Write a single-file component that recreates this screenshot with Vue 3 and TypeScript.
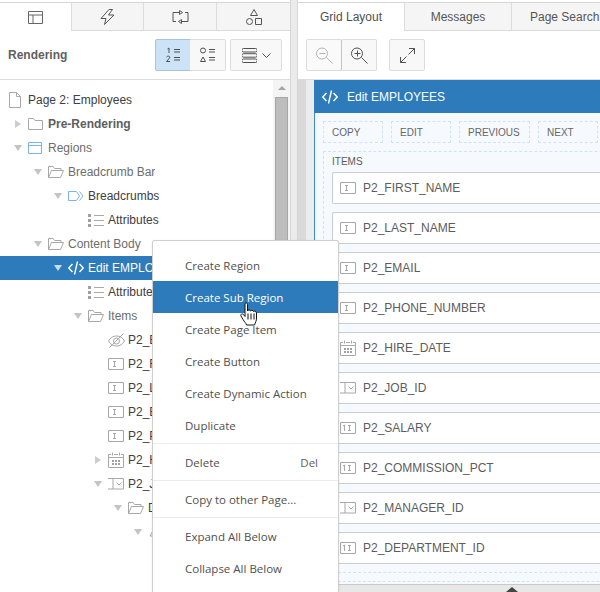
<script setup lang="ts">
interface TreeRow {
  label: string
  level: number
  icon: string
  twisty?: 'open' | 'closed'
  tone?: string
  clip?: boolean
}

const MENU_LEFT = 152

const iconSizes: Record<string, [number, number]> = {
  page: [14, 16],
  folder: [15, 12],
  open: [16, 12],
  region: [14, 12],
  crumb: [16, 10],
  list: [16, 13],
  code: [16, 14],
  hidden: [17, 15],
  input: [16, 12],
  number: [16, 12],
  date: [16, 16],
  select: [16, 12],
  shape: [14, 12],
}

const rows: TreeRow[] = [
  { label: 'Page 2: Employees', level: -1, icon: 'page', tone: 'dark' },
  { label: 'Pre-Rendering', level: 0, icon: 'folder', twisty: 'closed', tone: 'bold' },
  { label: 'Regions', level: 0, icon: 'region', twisty: 'open', tone: 'muted' },
  { label: 'Breadcrumb Bar', level: 1, icon: 'open', twisty: 'open', tone: 'muted' },
  { label: 'Breadcrumbs', level: 2, icon: 'crumb', twisty: 'open', tone: 'dark' },
  { label: 'Attributes', level: 3, icon: 'list', tone: 'dark' },
  { label: 'Content Body', level: 1, icon: 'open', twisty: 'open', tone: 'muted' },
  { label: 'Edit EMPLOYEES', level: 2, icon: 'code', twisty: 'open', tone: 'selected', clip: true },
  { label: 'Attributes', level: 3, icon: 'list', tone: 'dark', clip: true },
  { label: 'Items', level: 3, icon: 'open', twisty: 'open', tone: 'muted', clip: true },
  { label: 'P2_EMPLOYEE_ID', level: 4, icon: 'hidden', tone: 'dark', clip: true },
  { label: 'P2_FIRST_NAME', level: 4, icon: 'input', tone: 'dark', clip: true },
  { label: 'P2_LAST_NAME', level: 4, icon: 'input', tone: 'dark', clip: true },
  { label: 'P2_EMAIL', level: 4, icon: 'input', tone: 'dark', clip: true },
  { label: 'P2_PHONE_NUMBER', level: 4, icon: 'input', tone: 'dark', clip: true },
  { label: 'P2_HIRE_DATE', level: 4, icon: 'date', twisty: 'closed', tone: 'dark', clip: true },
  { label: 'P2_JOB_ID', level: 4, icon: 'select', twisty: 'open', tone: 'dark', clip: true },
  { label: 'Default', level: 5, icon: 'open', twisty: 'open', tone: 'dark', clip: true },
  { label: 'Action', level: 6, icon: 'shape', twisty: 'open', tone: 'dark', clip: true },
]

function rowIndent(level: number): number {
  return 8 + (level + 1) * 20
}

function textClip(row: TreeRow): Record<string, string> {
  if (!row.clip) return {}
  const room = Math.max(0, MENU_LEFT - (rowIndent(row.level) + 20))
  return { maxWidth: room + 'px' }
}

const items = [
  { name: 'P2_FIRST_NAME', icon: 'input' },
  { name: 'P2_LAST_NAME', icon: 'input' },
  { name: 'P2_EMAIL', icon: 'input' },
  { name: 'P2_PHONE_NUMBER', icon: 'input' },
  { name: 'P2_HIRE_DATE', icon: 'date' },
  { name: 'P2_JOB_ID', icon: 'select' },
  { name: 'P2_SALARY', icon: 'number' },
  { name: 'P2_COMMISSION_PCT', icon: 'number' },
  { name: 'P2_MANAGER_ID', icon: 'select' },
  { name: 'P2_DEPARTMENT_ID', icon: 'number' },
]

const gridButtons = ['COPY', 'EDIT', 'PREVIOUS', 'NEXT']

const menuGroups = [
  [
    { label: 'Create Region' },
    { label: 'Create Sub Region', active: true },
    { label: 'Create Page Item' },
    { label: 'Create Button' },
    { label: 'Create Dynamic Action' },
    { label: 'Duplicate' },
  ],
  [{ label: 'Delete', key: 'Del' }],
  [{ label: 'Copy to other Page...' }],
  [{ label: 'Expand All Below' }, { label: 'Collapse All Below' }],
]
</script>

<template>
  <div class="app">
    <svg class="defs" width="0" height="0" aria-hidden="true">
      <defs>
        <symbol id="i-page" viewBox="0 0 14 16"><path d="M1.5.5h7l4 4v11h-11zM8.5.5v4h4" /></symbol>
        <symbol id="i-folder" viewBox="0 0 15 12"><path d="M.5 1.5V.5h5l1.5 2h7.500v9H.5z" /></symbol>
        <symbol id="i-open" viewBox="0 0 16 12"><path d="M.5 11.500V.5h4.500l1.500 2h6.500v2M.5 11.500h12l3-7H3.500z" /></symbol>
        <symbol id="i-region" viewBox="0 0 14 12"><path d="M.5.5h13v11H.5zM.5 3.500h13" /></symbol>
        <symbol id="i-crumb" viewBox="0 0 16 10"><path d="M.5.5h8l3 4.500-3 4.500h-8zM11.500.5l3.500 4.500-3.500 4.500" /></symbol>
        <symbol id="i-list" viewBox="0 0 16 13"><path d="M6 1.500h10M6 6.500h10M6 11.500h10" /><path class="dot" d="M0 0h3v3H0zM0 5h3v3H0zM0 10h3v3H0z" /></symbol>
        <symbol id="i-code" viewBox="0 0 16 14"><path d="M4.500 3 .8 7l3.700 4M11.500 3l3.700 4-3.700 4M9.500.5l-3 13" /></symbol>
        <symbol id="i-hidden" viewBox="0 0 17 15"><path d="M.5 8c2-3.500 4.700-5 8-5s6 1.500 8 5c-2 3.500-4.700 5-8 5s-6-1.500-8-5zM5.500 8a3 3 0 1 0 6 0 3 3 0 1 0-6 0M1.500 14.500l14-14" /></symbol>
        <symbol id="i-input" viewBox="0 0 16 12"><path d="M.5.500h15v11H.5zM5 3.500h3M5 8.500h3M6.500 3.500v5" /></symbol>
        <symbol id="i-number" viewBox="0 0 16 12"><path d="M.5.500h15v11H.5zM3 4l1.500-1v6M8 3.500h3M8 8.500h3M9.500 3.500v5" /></symbol>
        <symbol id="i-date" viewBox="0 0 16 16"><path d="M3 2.500H.5v13h15v-13H13M6 2.500h4M.5 5.500h15M4.500 .5v3M11.500 .5v3" /><path class="dot" d="M4 8h2v2H4zM7 8h2v2H7zM10 8h2v2h-2zM4 11h2v2H4zM7 11h2v2H7zM10 11h2v2h-2z" /></symbol>
        <symbol id="i-select" viewBox="0 0 16 12"><path d="M0 .5h15.500v10.500H0M5 .5v10.500M8.500 4.500l2.500 2.500 2.500-2.500" /></symbol>
        <symbol id="i-shape" viewBox="0 0 14 12"><path d="M7 1l5 9H2z" /></symbol>
      </defs>
    </svg>

    <section class="left">
      <div class="top-line"></div>
      <div class="tabs">
        <div class="tab tab-on">
          <svg width="15" height="13" viewBox="0 0 15 13"><path d="M.5.500h14v12H.5zM.5 4h14M5 4v8.500" /></svg>
        </div>
        <div class="tab">
          <svg width="15" height="16" viewBox="0 0 15 16"><path d="M9 .5 1 9.500h5L4.500 15.500 14 6H8.500l4-5.500z" /></svg>
        </div>
        <div class="tab">
          <svg width="17" height="14" viewBox="0 0 17 14"><path d="M7 2.500H1v9h3M10 11.500h6v-9h-3M7.500.5v4l3-2zM9.500 9.500v4l-3-2z" /></svg>
        </div>
        <div class="tab">
          <svg width="16" height="16" viewBox="0 0 16 16"><path d="M8 .5l3.500 6h-7zM9.500 9.500h6v6h-6zM6.500 12.500a3 3 0 1 1-6 0 3 3 0 1 1 6 0z" /></svg>
        </div>
      </div>

      <div class="toolbar left-toolbar">
        <span class="panel-title">Rendering</span>
        <div class="btn-group">
          <button class="tbtn toggle toggle-on" type="button">
            <svg width="14" height="16" viewBox="0 0 14 16"><path d="M1.500 2 3 1v5M8 2.500h6M8 5h6M8 10.500h6M8 13h6M.5 10c1-1.500 4-1 3 1L.5 14.500h3.500" /></svg>
          </button>
          <button class="tbtn toggle" type="button">
            <svg width="15" height="16" viewBox="0 0 15 16"><path d="M5.500 3.500a2.500 2.500 0 1 1-5 0 2.500 2.500 0 1 1 5 0zM3 10l2.500 4.500h-5zM9 2.500h6M9 5h6M9 10.500h6M9 13h6" /></svg>
          </button>
        </div>
        <button class="tbtn view-btn" type="button">
          <svg width="15" height="15" viewBox="0 0 15 15"><path d="M1.500.5h12a1 1 0 0 1 0 3.500h-12a1 1 0 0 1 0-3.500zM1.500 5.700h12a1 1 0 0 1 0 3.500h-12a1 1 0 0 1 0-3.500zM1.500 11h12a1 1 0 0 1 0 3.500h-12a1 1 0 0 1 0-3.500z" /></svg>
          <svg width="9" height="5" viewBox="0 0 9 5"><path d="M.5.500l4 4 4-4" /></svg>
        </button>
      </div>

      <div class="tree-wrap">
        <div class="tree">
          <div
            v-for="(row, i) in rows"
            :key="i"
            class="row"
            :class="row.tone"
            :style="{ paddingLeft: rowIndent(row.level) + 'px' }"
          >
            <span class="twist-slot">
              <span v-if="row.twisty" class="twisty" :class="row.twisty"></span>
            </span>
            <span class="icon-slot">
              <svg
                class="ico"
                :class="'ico-' + row.icon"
                :width="iconSizes[row.icon][0]"
                :height="iconSizes[row.icon][1]"
              ><use :href="'#i-' + row.icon" /></svg>
            </span>
            <span class="row-text" :style="textClip(row)">{{ row.label }}</span>
          </div>
        </div>
        <div class="scrollbar">
          <span class="scroll-up"></span>
          <span class="scroll-thumb"></span>
        </div>
      </div>
    </section>

    <div class="splitter"></div>

    <section class="right">
      <div class="top-line"></div>
      <div class="tabs right-tabs">
        <div class="rtab tab-on">Grid Layout</div>
        <div class="rtab">Messages</div>
        <div class="rtab rtab-last">Page Search</div>
      </div>

      <div class="toolbar right-toolbar">
        <div class="btn-group">
          <button class="tbtn zoom zoom-off" type="button">
            <svg width="17" height="17" viewBox="0 0 17 17"><path d="M11.500 6.500a5.500 5.500 0 1 1-11 0 5.500 5.500 0 1 1 11 0zM3.500 6.500h6M10.500 10.500l6 6" /></svg>
          </button>
          <button class="tbtn zoom" type="button">
            <svg width="17" height="17" viewBox="0 0 17 17"><path d="M11.500 6.500a5.500 5.500 0 1 1-11 0 5.500 5.500 0 1 1 11 0zM3.500 6.500h6M6.500 3.500v6M10.500 10.500l6 6" /></svg>
          </button>
        </div>
        <button class="tbtn zoom expand" type="button">
          <svg width="15" height="15" viewBox="0 0 15 15"><path d="M9 .5h5.500V6M14.500.5l-6 6M6 14.500H.5V9M.5 14.500l6-6" /></svg>
        </button>
      </div>

      <div class="canvas">
        <div class="card">
          <header class="card-head">
            <svg class="head-ico" width="16" height="14"><use href="#i-code" /></svg>
            <span>Edit EMPLOYEES</span>
          </header>
          <div class="card-body">
            <div class="grid-buttons">
              <span v-for="b in gridButtons" :key="b" class="grid-btn">{{ b }}</span>
            </div>
            <div class="items-box">
              <div class="items-label">ITEMS</div>
              <div class="items-list">
                <div v-for="it in items" :key="it.name" class="item">
                  <span class="item-ico">
                    <svg
                      class="ico"
                      :width="iconSizes[it.icon][0]"
                      :height="iconSizes[it.icon][1]"
                    ><use :href="'#i-' + it.icon" /></svg>
                  </span>
                  <span>{{ it.name }}</span>
                </div>
              </div>
            </div>
            <div class="empty-drop"></div>
          </div>
        </div>
      </div>
      <div class="strip"><span class="strip-arrow"></span></div>
    </section>

    <nav class="menu">
      <template v-for="(group, g) in menuGroups" :key="g">
        <div v-if="g > 0" class="menu-sep"></div>
        <div
          v-for="entry in group"
          :key="entry.label"
          class="menu-item"
          :class="{ 'menu-active': 'active' in entry && entry.active }"
        >
          <span>{{ entry.label }}</span>
          <span v-if="'key' in entry" class="menu-key">{{ entry.key }}</span>
        </div>
      </template>
    </nav>

    <svg class="cursor" width="18" height="25" viewBox="0 0 18 25">
      <path
        d="M5 1.500c1-1 2.500-.5 2.500 1V9c.5-1.500 2.500-1.500 3 0 .5-1 2.500-1 3 .5.700-.8 2.800-.5 3 1.500v5c0 3-1 4-2 7H6.500c-.5-2-2-3-3.500-5.500L1 14c-.8-1.500 1-3 2.500-1.500L5 14.500z"
      />
      <path class="cursor-lines" d="M8 11.500v6M11 11.500v6M14 11.500v6" />
    </svg>
  </div>
</template>

<style>
html,
body {
  margin: 0;
  padding: 0;
  background: #fff;
}
</style>

<style scoped>
.app {
  position: relative;
  display: flex;
  width: 600px;
  height: 592px;
  overflow: hidden;
  background: #fff;
  color: #404040;
  font-family: "Liberation Sans", Arial, sans-serif;
  font-size: 12px;
}

.defs {
  position: absolute;
}

.left {
  display: flex;
  flex-direction: column;
  width: 290px;
  flex: none;
}

.splitter {
  width: 8px;
  flex: none;
  box-sizing: border-box;
  background: #ebebeb;
  border-left: 1px solid #d6d6d6;
  border-right: 1px solid #d6d6d6;
}

.right {
  display: flex;
  flex-direction: column;
  flex: 1;
  min-width: 0;
  overflow: hidden;
}

.top-line {
  height: 3px;
  flex: none;
  box-sizing: border-box;
  border-bottom: 1px solid #d8d8d8;
}

.tabs {
  display: flex;
  height: 28px;
  flex: none;
  box-sizing: border-box;
  background: #f5f5f5;
  border-bottom: 1px solid #dcdcdc;
}

.tab {
  display: flex;
  width: 72px;
  flex: none;
  align-items: center;
  justify-content: center;
  box-sizing: border-box;
  border-right: 1px solid #dcdcdc;
  height: 27px;
}

.tab:nth-child(3) {
  width: 73px;
}

.tab svg {
  fill: none;
  stroke: #555;
}

.tab:last-child {
  width: 73px;
  border-right: none;
}

.tab-on {
  height: 28px;
  background: #fff;
  position: relative;
}

.tab-on svg {
  stroke: #666;
}

.rtab {
  display: flex;
  width: 107px;
  flex: none;
  align-items: center;
  justify-content: center;
  box-sizing: border-box;
  border-right: 1px solid #dcdcdc;
  height: 27px;
  color: #555;
}

.rtab.tab-on {
  height: 28px;
  color: #505050;
}

.rtab-last {
  justify-content: flex-start;
  padding-left: 18px;
  width: 100px;
  border-right: none;
}

.toolbar {
  display: flex;
  align-items: center;
  height: 49px;
  flex: none;
  box-sizing: border-box;
  border-bottom: 1px solid #dcdcdc;
  background: #fff;
}

.left-toolbar {
  padding: 0 8px;
}

.panel-title {
  flex: 1;
  font-weight: 700;
  color: #5f5f5f;
}

.btn-group {
  display: flex;
}

.tbtn {
  display: flex;
  align-items: center;
  justify-content: center;
  box-sizing: border-box;
  height: 32px;
  margin: 0;
  padding: 0;
  background: #f8f8f8;
  border: 1px solid #dcdcdc;
  border-radius: 2px;
}

.tbtn svg {
  fill: none;
  stroke: #505050;
}

.toggle {
  width: 36px;
  border-radius: 2px 0 0 2px;
}

.toggle + .toggle {
  margin-left: -1px;
  border-left: none;
  border-radius: 0 2px 2px 0;
}

.toggle-on {
  background: #cce2f7;
  border-color: #a9c3dc;
}

.view-btn {
  width: 52px;
  margin-left: 4px;
  gap: 5px;
}

.right-toolbar {
  padding: 0 8px;
}

.zoom {
  width: 36px;
}

.zoom + .zoom {
  margin-left: -1px;
  border-left-color: #c4c4c4;
}

.zoom-off {
  background: #fafafa;
}

.zoom-off svg {
  stroke: #b4b4b4;
}

.expand {
  margin-left: 12px;
}

.tree-wrap {
  display: flex;
  flex: 1;
  min-height: 0;
  overflow: hidden;
}

.tree {
  flex: 1;
  min-width: 0;
  padding-top: 8px;
}

.row {
  position: relative;
  display: flex;
  align-items: center;
  height: 24px;
  box-sizing: border-box;
  white-space: nowrap;
}

.row-text {
  display: block;
  overflow: hidden;
}

.twist-slot {
  position: absolute;
  width: 20px;
  height: 24px;
  margin-left: -20px;
  display: flex;
  align-items: center;
  justify-content: center;
}

.twisty {
  display: block;
  width: 0;
  height: 0;
}

.twisty.closed {
  border-top: 4px solid transparent;
  border-bottom: 4px solid transparent;
  border-left: 6px solid #cdcdcd;
  margin-left: -1px;
}

.twisty.open {
  border-left: 4px solid transparent;
  border-right: 4px solid transparent;
  border-top: 6px solid #c4c4c4;
}

.icon-slot {
  display: flex;
  width: 20px;
  flex: none;
  align-items: center;
}

.ico {
  display: block;
  overflow: visible;
  fill: none;
  stroke: #a8a8a8;
}

.dot {
  fill: #a0a0a0;
  stroke: none;
}

.ico-region,
.ico-crumb {
  stroke: #79b4ea;
}

.ico-code {
  stroke: #fff;
  stroke-width: 1.4;
}

.dark {
  color: #404040;
}

.muted {
  color: #6d6d6d;
}

.bold {
  color: #5e5e5e;
  font-weight: 700;
}

.selected {
  background: #2d7bba;
  color: #fff;
}

.selected .twisty.open {
  border-top-color: #c9dced;
}

.scrollbar {
  display: flex;
  flex-direction: column;
  align-items: center;
  width: 17px;
  flex: none;
  background: #f4f4f4;
}

.scroll-up {
  width: 0;
  height: 0;
  margin-top: 6px;
  border-left: 4px solid transparent;
  border-right: 4px solid transparent;
  border-bottom: 4px solid #a6a6a6;
}

.scroll-thumb {
  width: 13px;
  height: 300px;
  margin-top: 7px;
  box-sizing: border-box;
  background: #bdbdbd;
  border: 1px solid #a6a6a6;
}

.canvas {
  flex: 1;
  min-height: 0;
  overflow: hidden;
  box-sizing: border-box;
  border-left: 8px solid #d9d9d9;
  padding-left: 8px;
  background: #ececec;
}

.card {
  width: 340px;
  height: 100%;
  box-sizing: border-box;
  border-left: 1px solid #3b8ad0;
  border-bottom: 1px solid #c8c8c8;
  background: #f6fafe;
}

.card-head {
  display: flex;
  align-items: center;
  gap: 9px;
  height: 33px;
  padding-left: 8px;
  margin-left: -1px;
  background: #2d7bba;
  color: #fff;
  font-size: 12px;
}

.head-ico {
  overflow: visible;
  fill: none;
  stroke: #fff;
  stroke-width: 1.4;
}

.card-body {
  padding: 8px 0 0 8px;
}

.grid-buttons {
  display: flex;
  gap: 8px;
}

.grid-btn {
  display: flex;
  align-items: center;
  width: 60px;
  height: 22px;
  box-sizing: border-box;
  padding-left: 8px;
  border: 1px dashed #cfe3f7;
  font-size: 10px;
  color: #666;
}

.grid-btn:nth-child(3) {
  width: 71px;
}

.items-box {
  margin-top: 8px;
  padding: 0 0 8px 8px;
  box-sizing: border-box;
  width: 340px;
  border: 1px dashed #cfe3f7;
  border-right: none;
}

.items-label {
  height: 20px;
  line-height: 19px;
  font-size: 10px;
  color: #5a5a5a;
}

.items-list {
  display: flex;
  flex-direction: column;
  gap: 8px;
}

.item {
  display: flex;
  align-items: center;
  height: 32px;
  box-sizing: border-box;
  padding-left: 7px;
  background: #fff;
  border: 1px solid #c9ced3;
  border-right: none;
  border-radius: 2px 0 0 2px;
  color: #5c5c5c;
}

.item-ico {
  display: flex;
  width: 23px;
  flex: none;
}

.empty-drop {
  margin-top: 8px;
  border-top: 1px dashed #cfe3f7;
  height: 4px;
}

.strip {
  position: relative;
  height: 7px;
  flex: none;
  background: #e8e8e8;
}

.strip-arrow {
  position: absolute;
  left: 208px;
  bottom: 0;
  width: 0;
  height: 0;
  border-left: 6px solid transparent;
  border-right: 6px solid transparent;
  border-bottom: 5px solid #444;
}

.menu {
  position: absolute;
  left: 152px;
  top: 240px;
  width: 187px;
  height: 360px;
  box-sizing: border-box;
  padding-top: 8px;
  background: #fff;
  border: 1px solid #cfcfcf;
  border-radius: 2px;
  box-shadow: 0 1px 3px rgba(0, 0, 0, 0.08);
  font-family: "Open Sans", "Noto Sans", sans-serif;
  font-size: 11.5px;
  color: #505050;
}

.menu-item {
  display: flex;
  align-items: center;
  justify-content: space-between;
  height: 32px;
  box-sizing: border-box;
  padding: 0 20px 0 32px;
}

.menu-active {
  background: #2d7bba;
  color: #fff;
}

.menu-key {
  color: #606060;
}

.menu-sep {
  height: 1px;
  margin: 2px 0;
  background: #ececec;
}

.cursor {
  position: absolute;
  left: 240px;
  top: 302px;
  fill: #fff;
  stroke: #111;
}

.cursor-lines {
  fill: none;
}
</style>
